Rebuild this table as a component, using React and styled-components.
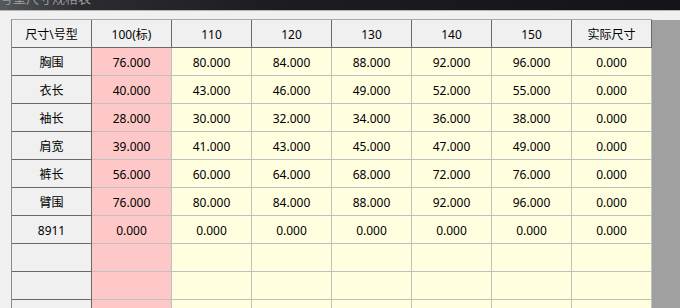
import React from 'react';
import styled, { createGlobalStyle } from 'styled-components';

const GlobalStyle = createGlobalStyle`
  html, body {
    margin: 0;
    padding: 0;
    background: #f0f0f0;
    overflow: hidden;
  }
  body {
    font-family: "Noto Sans", "Noto Sans CJK SC", sans-serif;
    font-size: 12px;
    color: #000;
  }
`;

const Window = styled.div`
  width: 680px;
  height: 308px;
  overflow: hidden;
  display: flex;
  flex-direction: column;
`;

// window caption, scrolled mostly out of view
const TitleBar = styled.div`
  height: 10px;
  flex: none;
  overflow: hidden;
  background: linear-gradient(to right, #55585c 0%, #2a2c31 12%, #1b1d22 40%, #121418 100%);
  border-bottom: 1px solid #b4b4b4;
`;

const TitleText = styled.div`
  margin-top: -10px;
  padding-left: 0;
  font-size: 13px;
  line-height: 16px;
  color: #9a9a9a;
  white-space: nowrap;
`;

const Body = styled.div`
  flex: 1;
  padding-top: 8px;
  display: flex;
  min-height: 0;
`;

const GridWrap = styled.div`
  margin-left: 11px;
  display: flex;
  flex: 1;
  align-items: stretch;
`;

const Grid = styled.div`
  display: grid;
  grid-template-columns: repeat(8, 80px);
  grid-auto-rows: 28px;
  border-left: 1px solid #8c8c8c;
  border-top: 1px solid #a8a8a8;
  align-content: start;
`;

const Filler = styled.div`
  flex: 1;
  margin-top: 1px;
  background: #a0a0a0;
`;

const Cell = styled.div`
  box-sizing: border-box;
  display: flex;
  align-items: center;
  justify-content: center;
  border-right: 1px solid ${p => (p.$fixed ? '#696969' : '#c0c0c0')};
  border-bottom: 1px solid ${p => (p.$fixed ? '#696969' : '#c0c0c0')};
  background: ${p => p.$bg};
  white-space: nowrap;
  padding-top: 1px;
`;

const sizes = ['100(标)', '110', '120', '130', '140', '150', '实际尺寸'];

const rows = [
  ['胸围', '76.000', '80.000', '84.000', '88.000', '92.000', '96.000', '0.000'],
  ['衣长', '40.000', '43.000', '46.000', '49.000', '52.000', '55.000', '0.000'],
  ['袖长', '28.000', '30.000', '32.000', '34.000', '36.000', '38.000', '0.000'],
  ['肩宽', '39.000', '41.000', '43.000', '45.000', '47.000', '49.000', '0.000'],
  ['裤长', '56.000', '60.000', '64.000', '68.000', '72.000', '76.000', '0.000'],
  ['臂围', '76.000', '80.000', '84.000', '88.000', '92.000', '96.000', '0.000'],
  ['8911', '0.000', '0.000', '0.000', '0.000', '0.000', '0.000', '0.000'],
  ['', '', '', '', '', '', '', ''],
  ['', '', '', '', '', '', '', ''],
  ['', '', '', '', '', '', '', ''],
];

const HEAD = '#f0f0f0';
const PINK = '#ffc8c8';
const CREAM = '#ffffe0';

export default function App() {
  return (
    <>
      <GlobalStyle />
      <Window>
        <TitleBar>
          <TitleText>号型尺寸规格表</TitleText>
        </TitleBar>
        <Body>
          <GridWrap>
            <Grid>
              <Cell $fixed $bg={HEAD}>尺寸\号型</Cell>
              {sizes.map(s => (
                <Cell key={s} $fixed $bg={HEAD}>{s}</Cell>
              ))}
              {rows.map((row, r) =>
                row.map((v, c) =>
                  c === 0 ? (
                    <Cell key={`${r}-${c}`} $fixed $bg={HEAD}>{v}</Cell>
                  ) : (
                    <Cell key={`${r}-${c}`} $bg={c === 1 ? PINK : CREAM}>{v}</Cell>
                  )
                )
              )}
            </Grid>
            <Filler />
          </GridWrap>
        </Body>
      </Window>
    </>
  );
}
